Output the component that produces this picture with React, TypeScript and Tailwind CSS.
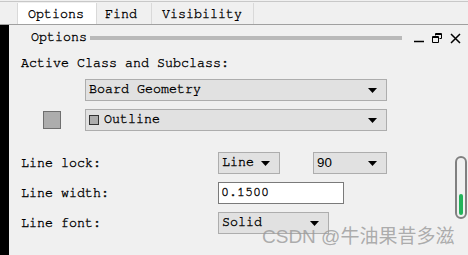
const mono = "font-['Nimbus_Mono_PS','FreeMono','Courier_New','Liberation_Mono','Noto_Sans_CJK_SC',monospace] text-[13.33px] text-black [-webkit-text-stroke:0.35px_#000]"

function Arrow() {
  return (
    <svg width="9" height="5" viewBox="0 0 9 5" className="shrink-0">
      <path d="M0 0h9L4.5 5z" fill="#000" />
    </svg>
  )
}

function Combo({ label, className, sans, swatch }: { label: string; className: string; sans?: boolean; swatch?: boolean }) {
  return (
    <div className={`flex items-center justify-between h-[22px] border border-[#adadad] bg-[#e1e1e1] pl-[3px] pr-[9px] ${className}`}>
      <span className={`flex items-center gap-[5px] ${sans ? "font-['Liberation_Sans',sans-serif] text-[13.33px] [-webkit-text-stroke:0px]" : ''}`}>
        {swatch && <span className="w-[10px] h-[10px] border border-[#333] bg-[#adadad]" />}
        {label}
      </span>
      <Arrow />
    </div>
  )
}

export default function App() {
  return (
    <div className={`w-[468px] h-[255px] bg-[#f0f0f0] overflow-hidden relative flex flex-col ${mono}`}>
      <div className="h-[1px] mt-[1px] bg-[#c8c8c8]" />
      {/* tabs */}
      <div className="flex h-[22px] mt-[1px] pl-[17px] border-b border-[#a0a0a0]">
        <div className="w-[80px] bg-white border-x border-[#d9d9d9] flex items-center pl-[10px] pt-[2px] leading-none">Options</div>
        <div className="w-[55px] border-r border-[#d9d9d9] flex items-center pl-[8px] pt-[2px] leading-none">Find</div>
        <div className="w-[102px] border-r border-[#d9d9d9] flex items-center pl-[10px] pt-[2px] leading-none">Visibility</div>
      </div>

      <div className="flex flex-1">
        <div className="w-[9px] bg-black" />
        <div className="flex-1 flex flex-col pl-[12px]">
          {/* panel title */}
          <div className="flex items-center h-[22px] mt-[2px]">
            <span className="ml-[10px] leading-none">Options</span>
            <div className="w-[312px] h-[4px] bg-[#b9b9b9] ml-[3px]" />
            <div className="flex items-center ml-[12px] gap-[8px]">
              <svg width="10" height="10" viewBox="0 0 10 10">
                <path d="M0 8.5h10" stroke="#000" strokeWidth="1.5" />
              </svg>
              <svg width="10" height="10" viewBox="0 0 10 10">
                <path d="M3.5 0.5h6v5h-2M3.5 0.5v2" stroke="#000" fill="none" strokeWidth="1" />
                <path d="M0.5 3.5h6v6h-6z" stroke="#000" fill="none" strokeWidth="1" />
                <path d="M0.5 4.5h6M3.5 1.5h6" stroke="#000" strokeWidth="1" />
              </svg>
              <svg width="11" height="11" viewBox="0 0 11 11">
                <path d="M1 1l9 9M10 1l-9 9" stroke="#000" strokeWidth="1.5" />
              </svg>
            </div>
          </div>

          <div className="mt-[8px] leading-none">Active Class and Subclass:</div>

          <Combo label="Board Geometry" className="ml-[64px] w-[302px] mt-[9px]" />

          <div className="flex items-center mt-[8px]">
            <div className="ml-[22px] w-[18px] h-[18px] border border-[#6f6f6f] bg-[#adadad]" />
            <Combo label="Outline" swatch className="ml-[24px] w-[302px]" />
          </div>

          <div className="flex items-center mt-[21px] h-[22px]">
            <span className="w-[197px] leading-none">Line lock:</span>
            <Combo label="Line" className="w-[62px]" />
            <Combo label="90" sans className="ml-[33px] w-[74px]" />
          </div>

          <div className="flex items-center mt-[8px] h-[22px]">
            <span className="w-[197px] leading-none">Line width:</span>
            <div className="w-[126px] h-[22px] bg-white border border-[#7a7a7a] flex items-center pl-[2px]">0.1500</div>
          </div>

          <div className="flex items-center mt-[8px] h-[22px]">
            <span className="w-[197px] leading-none">Line font:</span>
            <Combo label="Solid" className="w-[111px]" />
          </div>
        </div>
      </div>

      {/* progress indicator */}
      <div className="absolute left-[455px] top-[156px] w-[12px] h-[63px] rounded-full border-[2px] border-[#808080] bg-[#f0f0f0] flex flex-col justify-end p-[2px]">
        <div className="h-[21px] rounded-full bg-[#22b35a]" />
      </div>

      {/* watermark */}
      <div className="absolute left-[262px] top-[227px] text-[19px] text-[#9a9a9a]/80 font-['Liberation_Sans','Noto_Sans_CJK_SC',sans-serif] leading-none [-webkit-text-stroke:0px]">
        CSDN @牛油果昔多滋
      </div>
    </div>
  )
}
